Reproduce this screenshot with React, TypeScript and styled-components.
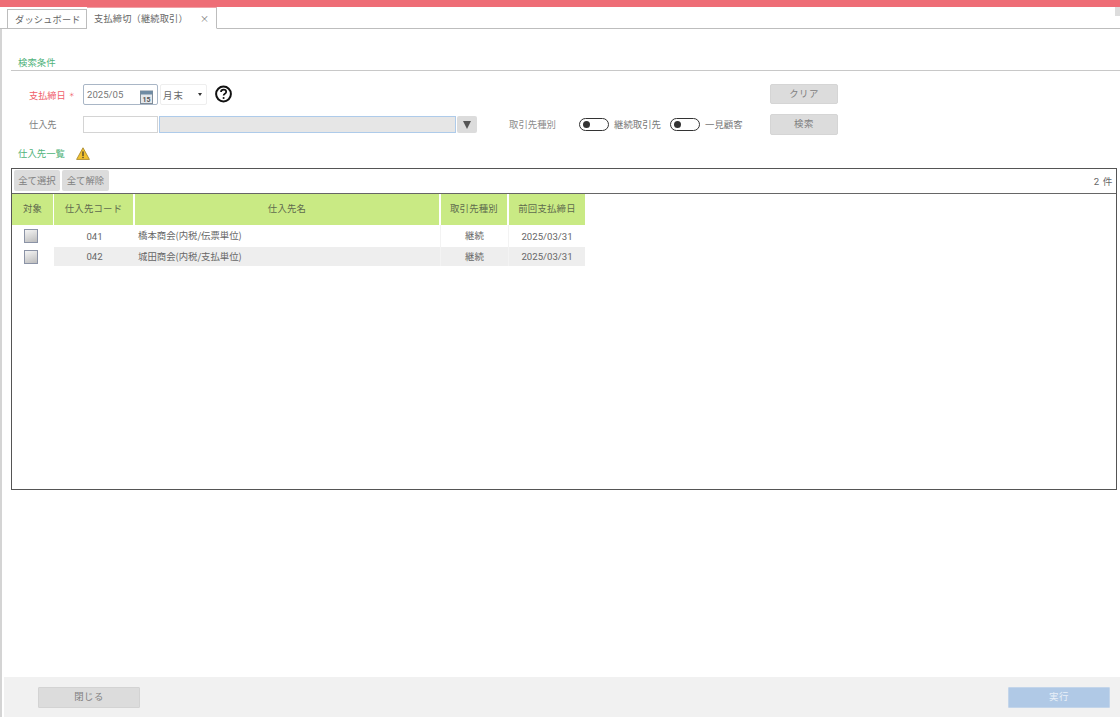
import React from "react";
import styled, { createGlobalStyle } from "styled-components";

const Global = createGlobalStyle`
  html, body { margin: 0; padding: 0; background: #fff; }
  body { font-family: "Noto Sans CJK JP", "Noto Sans", sans-serif; font-size: 9.4px; color: #666; }
  * { box-sizing: border-box; }
`;

const Page = styled.div`
  width: 1120px; height: 717px; display: flex; flex-direction: column; overflow: hidden; background: #fff;
`;
const TopBar = styled.div`height: 7px; background: #ee6d76; flex: none;`;
const TabBar = styled.div`
  height: 22px; flex: none; display: flex; align-items: flex-end; padding-left: 7px;
  border-bottom: 1px solid #bdbdbd; position: relative;
`;
const Nub = styled.div`position: absolute; top: 0; right: 0; width: 5px; height: 9px; background: #ddd;`;
const Tab = styled.div<{ $active?: boolean }>`
  height: ${p => (p.$active ? 22 : 20)}px; width: ${p => (p.$active ? 130 : 80)}px;
  margin-bottom: -1px; display: flex; align-items: center; padding-left: 7px; gap: 12px;
  font-size: 9.2px; white-space: nowrap; letter-spacing: 0.2px; color: #666; background: #fff;
  border: 1px solid #bdbdbd;
  border-left: ${p => (p.$active ? "none" : "1px solid #bdbdbd")};
  border-bottom: ${p => (p.$active ? "1px solid #fff" : "1px solid #bdbdbd")};
  ${p => p.$active && "border-top: 1px solid #f2a0a6;"}
`;
const Close = styled.span`font-size: 9px; color: #777; line-height: 1; flex: none;`;
const Main = styled.div`
  flex: 1; display: flex; flex-direction: column; border-left: 2px solid #d4d4d4; min-height: 0;
`;
const Content = styled.div`flex: 1; padding: 0 2px 0 9px; display: flex; flex-direction: column; min-height: 0;`;
const SectionHead = styled.div`
  margin-top: 27px; height: 15px; border-bottom: 1px solid #c8c8c8; padding: 1px 0 0 7px;
  color: #4fb27a; line-height: 11px; margin-right: -3px;
`;
const SearchArea = styled.div`display: flex; margin-top: 13px; height: 51px;`;
const FormCol = styled.div`width: 759px; display: flex; flex-direction: column;`;
const Row = styled.div<{ $top?: number }>`
  display: flex; align-items: center; margin-top: ${p => p.$top ?? 0}px; height: 21px;
`;
const Label = styled.div<{ $req?: boolean }>`
  width: 72px; padding: 0 0 ${p => (p.$req ? 0 : 2)}px 18px; font-size: 9.2px; white-space: nowrap; display: flex; align-items: center;
  color: ${p => (p.$req ? "#f0606a" : "#808080")};
`;
const Req = styled.span`font-size: 6px; margin-left: 3px;`;
const DateBox = styled.div`
  width: 75px; height: 21px; border: 1px solid #a9b6c6; border-radius: 2px; display: flex; align-items: center;
  justify-content: space-between; padding: 0 4px 0 3px; font-family: "Roboto", sans-serif; font-size: 9.6px; color: #777;
`;
const CalIcon = styled.svg`margin-top: 4px; display: block;`;
const SelectBox = styled.div`
  width: 47px; height: 21px; margin-left: 2px; border: 1px solid #eee; border-radius: 2px; display: flex; align-items: center;
  justify-content: space-between; padding: 0 4px 0 2px; letter-spacing: 1px; color: #666;
`;
const Caret = styled.span`
  width: 0; height: 0; border-left: 2.5px solid transparent; border-right: 2.5px solid transparent; border-top: 3px solid #333;
`;
const HelpIcon = styled.svg`margin-left: 8px; margin-top: -1px; display: block; flex: none;`;
const CodeInput = styled.div`width: 75px; height: 17px; border: 1px solid #d4d4d4;`;
const NameInput = styled.div`width: 297px; height: 17px; margin-left: 1px; background: #e6e6e6; border: 1px solid #aecbea;`;
const ArrowBtn = styled.div`
  width: 20px; height: 17px; margin-left: 1px; background: #dcdcdc; border-radius: 2px;
  display: flex; align-items: center; justify-content: center;
`;
const Arrow = styled.span`
  width: 0; height: 0; border-left: 4.5px solid transparent; border-right: 4.5px solid transparent; border-top: 8px solid #555;
`;
const TypeLabel = styled.div`margin-left: 32px; width: 70px; padding-bottom: 2px; color: #8c8c8c;`;
const Toggle = styled.div`
  width: 30px; height: 13px; border: 1.5px solid #333; border-radius: 7px; flex: none; background: #fff;
  display: flex; align-items: center; padding-left: 3px;
`;
const Knob = styled.span`width: 7px; height: 7px; border-radius: 50%; background: #333; display: block;`;
const ToggleText = styled.div<{ $w: number }>`
  margin-left: 5px; width: ${p => p.$w}px; padding-bottom: 1px; color: #777; white-space: nowrap;
`;
const BtnCol = styled.div`display: flex; flex-direction: column; gap: 10px;`;
const GrayBtn = styled.div<{ $w: number; $h: number; $lift: number }>`
  width: ${p => p.$w}px; height: ${p => p.$h}px; padding-bottom: ${p => p.$lift}px; background: #dcdcdc; border: 1px solid #d5d5d5; border-radius: 2px;
  display: flex; align-items: center; justify-content: center; color: #808080; letter-spacing: 0.5px;
`;
const ListHead = styled.div`
  display: flex; align-items: center; height: 16px; margin-top: 10px; padding-left: 7px;
  color: #4fb27a; gap: 11px;
`;
const Panel = styled.div`
  margin-top: 7px; width: 1106px; height: 322px; border: 1px solid #555; display: flex; flex-direction: column;
`;
const Toolbar = styled.div`
  height: 25px; flex: none; border-bottom: 1px solid #666; display: flex; align-items: center; padding: 0 3px 1px 2px; gap: 2px;
`;
const ToolBtn = styled.div`
  width: 47px; height: 21px; padding-bottom: 1px; background: #dcdcdc; border-radius: 2px; display: flex; align-items: center; justify-content: center;
  color: #808080;
  &:first-child { width: 46px; }
`;
const Count = styled.div`margin-left: auto; color: #666; font-family: "Roboto", "Noto Sans CJK JP", sans-serif; font-size: 9.6px; letter-spacing: 0.6px;`;
const Table = styled.div`
  display: grid; grid-template-columns: 42px 81px 306px 68px 76px; width: 573px;
`;
const HeadCell = styled.div`
  height: 31px; padding-bottom: 3px; background: #c9ea84; border-right: 2px solid #fff; display: flex; align-items: center; justify-content: center;
  color: #5f6a4e; letter-spacing: 0.2px;
  &:first-child { border-right-width: 1px; }
  &:nth-child(5) { border-right: none; }
`;
const Cell = styled.div<{ $alt?: boolean; $left?: boolean; $line?: boolean; $num?: boolean }>`
  height: ${p => (p.$alt ? 19 : 22)}px; display: flex; align-items: center; background: ${p => (p.$alt ? "#eeeeee" : "#fff")};
  justify-content: ${p => (p.$left ? "flex-start" : "center")}; padding: 0 0 ${p => (p.$num ? 0 : 2)}px ${p => (p.$left ? 3 : 0)}px;
  color: #666; white-space: nowrap;
  font-family: ${p => (p.$num ? '"Roboto", sans-serif' : "inherit")};
  ${p => p.$num && "font-size: 9.6px;"}
  ${p => p.$line && "border-right: 1px solid #f3f3f3;"}
`;
const CheckCell = styled.div`display: flex; align-items: center; justify-content: center; padding-right: 5px; background: #fff;`;
const CheckBox = styled.div`
  width: 14px; height: 14px; border: 1px solid #8b93a6; background: linear-gradient(160deg, #f4f4f4, #bcbcbc);
`;
const Footer = styled.div`
  height: 40px; flex: none; margin-left: 2px; background: #f1f1f1; display: flex; align-items: center; justify-content: space-between;
  padding: 0 10px 0 34px;
`;
const FootBtn = styled.div<{ $primary?: boolean }>`
  width: 102px; height: 21px; padding-bottom: 4px; border-radius: 1px; display: flex; align-items: center; justify-content: center;
  letter-spacing: 0.5px; margin-top: 1px;
  background: ${p => (p.$primary ? "#b0c9e6" : "#dcdcdc")};
  border: 1px solid ${p => (p.$primary ? "#c3d5ea" : "#d3d3d3")};
  color: ${p => (p.$primary ? "#e9f0f8" : "#808080")};
`;

const rows = [
  { code: "041", name: "橋本商会(内税/伝票単位)" },
  { code: "042", name: "城田商会(内税/支払単位)" },
];

export default function App() {
  return (
    <Page>
      <Global />
      <TopBar />
      <TabBar>
        <Tab>ダッシュボード</Tab>
        <Tab $active>支払締切（継続取引）<Close>×</Close></Tab>
        <Nub />
      </TabBar>
      <Main>
        <Content>
          <SectionHead>検索条件</SectionHead>
          <SearchArea>
            <FormCol>
              <Row>
                <Label $req>支払締日<Req>＊</Req></Label>
                <DateBox>
                  2025/05
                  <CalIcon width="13" height="14" viewBox="0 0 13 14">
                    <rect x="0.5" y="1" width="12" height="12.5" fill="#e4e8ec" stroke="#7f8c99" />
                    <rect x="0.5" y="1" width="12" height="3.5" fill="#6f8ba3" />
                    <text x="6.5" y="12" fontSize="7" fontWeight="700" textAnchor="middle" fill="#555" fontFamily="Roboto, sans-serif">15</text>
                  </CalIcon>
                </DateBox>
                <SelectBox>月末<Caret /></SelectBox>
                <HelpIcon width="18" height="18" viewBox="0 0 18 18">
                  <circle cx="8.5" cy="9" r="7.4" fill="#fff" stroke="#111" strokeWidth="2" />
                  <path d="M6 7.1c0-1.5 1.2-2.4 2.6-2.4s2.6.9 2.6 2.2c0 1.9-2.6 1.9-2.6 3.6" fill="none" stroke="#111" strokeWidth="1.7" />
                  <circle cx="8.6" cy="13" r="1.05" fill="#111" />
                </HelpIcon>
              </Row>
              <Row $top={9}>
                <Label>仕入先</Label>
                <CodeInput />
                <NameInput />
                <ArrowBtn><Arrow /></ArrowBtn>
                <TypeLabel>取引先種別</TypeLabel>
                <Toggle><Knob /></Toggle>
                <ToggleText $w={56}>継続取引先</ToggleText>
                <Toggle><Knob /></Toggle>
                <ToggleText $w={44}>一見顧客</ToggleText>
              </Row>
            </FormCol>
            <BtnCol>
              <GrayBtn $w={68} $h={20} $lift={2}>クリア</GrayBtn>
              <GrayBtn $w={68} $h={21} $lift={3}>検索</GrayBtn>
            </BtnCol>
          </SearchArea>
          <ListHead>
            仕入先一覧
            <svg width="14" height="13" viewBox="0 0 14 13">
              <path d="M7 .8 13.4 12.4H.6Z" fill="#f2c230" stroke="#a98a2e" strokeWidth="0.9" strokeLinejoin="round" />
              <rect x="6.4" y="4.4" width="1.2" height="4.6" fill="#333" />
              <rect x="6.4" y="9.8" width="1.2" height="1.3" fill="#333" />
            </svg>
          </ListHead>
          <Panel>
            <Toolbar>
              <ToolBtn>全て選択</ToolBtn>
              <ToolBtn>全て解除</ToolBtn>
              <Count>2 件</Count>
            </Toolbar>
            <Table>
              <HeadCell>対象</HeadCell>
              <HeadCell>仕入先コード</HeadCell>
              <HeadCell>仕入先名</HeadCell>
              <HeadCell>取引先種別</HeadCell>
              <HeadCell>前回支払締日</HeadCell>
              {rows.map((r, i) => {
                const alt = i === 1;
                return (
                  <React.Fragment key={r.code}>
                    <CheckCell><CheckBox /></CheckCell>
                    <Cell $alt={alt} $num>{r.code}</Cell>
                    <Cell $alt={alt} $left $line>{r.name}</Cell>
                    <Cell $alt={alt} $line>継続</Cell>
                    <Cell $alt={alt} $num>2025/03/31</Cell>
                  </React.Fragment>
                );
              })}
            </Table>
          </Panel>
        </Content>
        <Footer>
          <FootBtn>閉じる</FootBtn>
          <FootBtn $primary>実行</FootBtn>
        </Footer>
      </Main>
    </Page>
  );
}
